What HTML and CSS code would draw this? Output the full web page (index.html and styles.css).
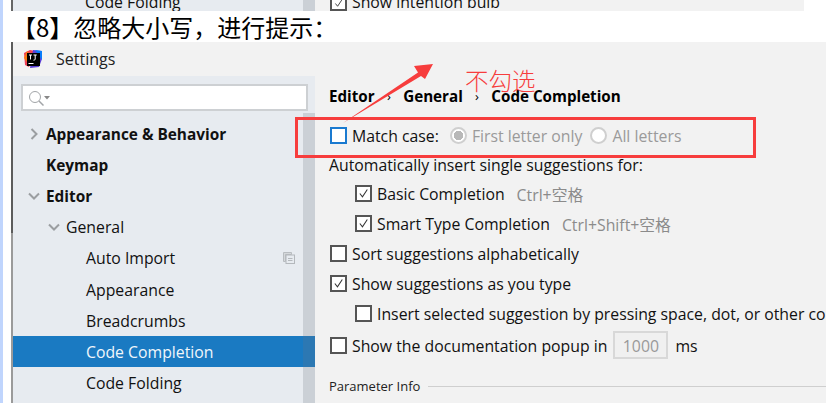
FILE: index.html
```html
<!DOCTYPE html>
<html lang="zh">
<head>
<meta charset="utf-8">
<title>Settings</title>
<link rel="stylesheet" href="styles.css">
</head>
<body>
<div class="page">
  <div class="strip">
    <div class="strip-side"><span class="strip-text">Code Folding</span><span class="strip-scroll"></span></div>
    <div class="strip-main">
      <span class="cb small checked"><svg viewBox="0 0 16 16"><path d="M3.5 8l3.2 4 6-9"/></svg></span>
      <span class="strip-label">Show intention bulb</span>
    </div>
  </div>
  <h1 class="heading">【8】忽略大小写，进行提示：</h1>
  <div class="window">
    <div class="titlebar">
      <svg class="logo" viewBox="0 0 20 20">
        <path d="M1 4l6-3 5 1-6 16-4-2z" fill="#ef4056"/>
        <path d="M1 9l3-7 4 4-4 7z" fill="#f97a12"/>
        <path d="M10 1l9 1v8l-3 8-9 1z" fill="#5a3fd6"/>
        <path d="M12 1l7 1v9z" fill="#087cfa"/>
        <rect x="4" y="4" width="13" height="13" fill="#000"/>
        <rect x="5.5" y="14" width="5" height="1" fill="#fff"/>
        <path d="M6 6h3M7.5 6v4.5M10.5 6h3.2M12.2 6v4.2q0 1-1.700 1" fill="none" stroke="#fff" stroke-width="1"/>
      </svg>
      <span class="title">Settings</span>
    </div>
    <div class="body">
      <aside class="side">
        <div class="search">
          <svg class="search-icon" viewBox="0 0 24 16"><circle cx="7" cy="7" r="5.500" fill="none" stroke="#a2a5a8" stroke-width="1"/><path d="M11 11l4.500 4.500" stroke="#a2a5a8" stroke-width="1.500"/><path d="M16 6h6l-3 3.500z" fill="#888"/></svg>
        </div>
        <ul class="tree">
          <li class="row lvl0 bold"><svg class="arrow" viewBox="0 0 12 12"><path d="M3.500 1l5 5-5 5"/></svg>Appearance &amp; Behavior</li>
          <li class="row lvl0 bold">Keymap</li>
          <li class="row lvl0 bold"><svg class="arrow" viewBox="0 0 12 12"><path d="M1 3.500l5 5 5-5"/></svg>Editor</li>
          <li class="row lvl1"><svg class="arrow" viewBox="0 0 12 12"><path d="M1 3.500l5 5 5-5"/></svg>General</li>
          <li class="row lvl2">Auto Import<svg class="copy" viewBox="0 0 12 12"><path d="M.5.500h8v2h-6v7h-2z" fill="#d4d7da" stroke="#b8bcc0"/><rect x="3" y="3" width="8.500" height="8.500" fill="#e7ebf0" stroke="#b4b8bc"/><path d="M5 6.500h4.500M5 8.500h4.500" stroke="#b4b8bc"/></svg></li>
          <li class="row lvl2">Appearance</li>
          <li class="row lvl2">Breadcrumbs</li>
          <li class="row lvl2 selected">Code Completion</li>
          <li class="row lvl2">Code Folding</li>
        </ul>
      </aside>
      <main class="content">
        <div class="crumbs"><span>Editor</span><i>›</i><span>General</span><i>›</i><span>Code Completion</span></div>
        <div class="line match">
          <span class="cb focus"></span><span class="txt">Match case:</span>
          <span class="radio on"></span><span class="txt dim">First letter only</span>
          <span class="radio"></span><span class="txt dim">All letters</span>
        </div>
        <div class="line auto"><span class="txt">Automatically insert single suggestions for:</span></div>
        <div class="line basic ind"><span class="cb checked"><svg viewBox="0 0 16 16"><path d="M3.500 8l3.200 4 6-9"/></svg></span><span class="txt">Basic Completion</span><span class="txt hint">Ctrl+空格</span></div>
        <div class="line smart ind"><span class="cb checked"><svg viewBox="0 0 16 16"><path d="M3.500 8l3.200 4 6-9"/></svg></span><span class="txt">Smart Type Completion</span><span class="txt hint">Ctrl+Shift+空格</span></div>
        <div class="line sort"><span class="cb"></span><span class="txt">Sort suggestions alphabetically</span></div>
        <div class="line show"><span class="cb checked"><svg viewBox="0 0 16 16"><path d="M3.500 8l3.200 4 6-9"/></svg></span><span class="txt">Show suggestions as you type</span></div>
        <div class="line insert ind"><span class="cb"></span><span class="txt nowrap">Insert selected suggestion by pressing space, dot, or other context-dependent keys</span></div>
        <div class="line doc"><span class="cb"></span><span class="txt">Show the documentation popup in</span><span class="num">1000</span><span class="txt">ms</span></div>
        <div class="group"><span>Parameter Info</span><b></b></div>
      </main>
    </div>
  </div>
  <div class="note">
    <svg class="red-arrow" viewBox="0 0 110 75"><path d="M8 68L83 17.500 79 11 98 9 90 24 86 21z" fill="#f73d3d"/></svg>
    <span class="note-text">不勾选</span>
    <div class="note-box"></div>
  </div>
</div>
</body>
</html>
```
FILE: styles.css
```css
* { box-sizing: border-box; }
html, body { margin: 0; padding: 0; height: 403px; overflow: hidden; background: #fff; }
.page {
  position: relative; width: 826px; height: 403px; overflow: hidden;
  border-left: 3px solid #c0d5fd; padding-left: 8px;
  font-family: "Open Sans", "Noto Sans CJK SC", sans-serif; color: #111;
}
.strip { display: flex; height: 11px; width: 793px; border-left: 2px solid #666; overflow: hidden; }
.strip-side { width: 302px; background: #e7ebf0; display: flex; justify-content: space-between; }
.strip-text { font-size: 15.800px; line-height: 16px; margin: -6px 0 0 72px; }
.strip-scroll { width: 12px; background: #cbd0d6; }
.strip-main { flex: 1; background: #f2f2f2; display: flex; align-items: flex-end; padding-left: 15px; }
.strip-label { font-size: 15.800px; line-height: 16px; margin-top: -6px; align-self: flex-start; }
.heading {
  margin: 0 0 0 1px; height: 31px; font-weight: 400; font-size: 24px; line-height: 31px; color: #000;
  font-family: "Noto Sans CJK SC", sans-serif; white-space: nowrap;
}
.window { border-left: 2px solid #666; border-image: linear-gradient(#5c5c5c 191px, #9a9a9a 191px) 1; background: #f2f2f2; height: 361px; }
.titlebar { height: 34px; display: flex; align-items: center; padding-left: 10px; }
.logo { width: 20px; height: 20px; }
.title { font-size: 16px; margin-left: 13px; color: #222; }
.body { display: flex; height: 327px; }
.side {
  width: 302px; flex: none; background: #e7ebf0; padding-top: 8px;
  display: flex; flex-direction: column;
}
.search {
  width: 287px; height: 27px; flex: none; margin-left: 8px; background: #fff; border: 2px solid #cdd0d3;
  display: flex; align-items: center; padding-left: 5px;
}
.search-icon { width: 24px; height: 16px; }
.tree {
  list-style: none; margin: 2px 0 0; padding: 5.500px 0 0; flex: 1;
  background: linear-gradient(to right, #e7ebf0 290px, #cbd0d6 290px);
}
.row { height: 31.100px; display: flex; align-items: center; font-size: 15.800px; position: relative; white-space: nowrap; }
.bold { font-weight: 700; font-size: 15.400px; }
.lvl0 { padding-left: 33px; }
.lvl1 { padding-left: 53px; }
.lvl2 { padding-left: 73px; }
.arrow { position: absolute; width: 12px; height: 12px; fill: none; stroke: #9b9ea1; stroke-width: 2; }
.lvl0 .arrow { left: 15px; }
.lvl1 .arrow { left: 35px; }
.copy { position: absolute; left: 270px; width: 12px; height: 12px; }
.selected { background: linear-gradient(to right, #1a7ac2 290px, #2c78b3 290px); color: #f0f6fb; }
.content { flex: 1; padding-left: 14px; min-width: 0; position: relative; font-size: 15.800px; }
.crumbs { display: flex; align-items: center; height: 20px; margin-top: 10px; font-weight: 700; font-size: 15.200px; line-height: 16px; white-space: nowrap; color: #000; }
.crumbs i { font-style: normal; font-weight: 400; width: 28.500px; text-align: center; font-size: 13px; }
.line { position: absolute; left: 15px; display: flex; align-items: center; height: 24px; white-space: nowrap; }
.ind { left: 40px; }
.match { top: 47px; }
.auto { top: 76px; left: 14px; }
.basic { top: 105px; }
.smart { top: 135px; }
.sort { top: 165px; }
.show { top: 195px; }
.insert { top: 225px; }
.doc { top: 257px; }
.txt { color: #111; padding-top: 2px; }
.dim { color: #9a9a9a; }
.hint { color: #8b8b8b; margin-left: 12px; }
.nowrap { white-space: nowrap; }
.cb {
  width: 17px; height: 17px; flex: none; background: #fff; border: 2px solid #555; margin-right: 5px; display: inline-flex;
}
.cb svg { width: 100%; height: 100%; fill: none; stroke: #333; stroke-width: 1.300; }
.cb.small { width: 17px; height: 15px; margin-right: 5px; }
.cb.focus { border-color: #1a7ad0; }
.radio { width: 17px; height: 17px; flex: none; border-radius: 50%; border: 2px solid #cfcfcf; background: #fff; margin: 0 5px 0 11px; }
.radio + .dim + .radio { margin-left: 8px; }
.radio.on { background: radial-gradient(circle, #b8b8b8 0 4.500px, #fff 5px); }
.num {
  width: 55px; height: 28px; margin: 0 7px 0 6px; background: #f0f0f0; border: 2px solid #d8d8d8; padding-top: 2px;
  color: #999; display: flex; align-items: center; justify-content: center;
}
.group { position: absolute; left: 14px; right: 0; top: 301px; display: flex; align-items: center; font-size: 13px; color: #222; }
.group b { flex: 1; height: 1px; background: #cfcfcf; margin-left: 8px; }
.note { position: absolute; inset: 0; left: -3px; pointer-events: none; }
.red-arrow { position: absolute; left: 335px; top: 55px; width: 110px; height: 75px; }
.note-text { position: absolute; left: 465px; top: 70px; font-size: 23.500px; line-height: 20px; color: #f73d3d; font-family: "Noto Sans CJK SC", sans-serif; font-weight: 300; }
.note-box { position: absolute; left: 295px; top: 117px; width: 461px; height: 41px; border: 3px solid #f73d3d; }
```
